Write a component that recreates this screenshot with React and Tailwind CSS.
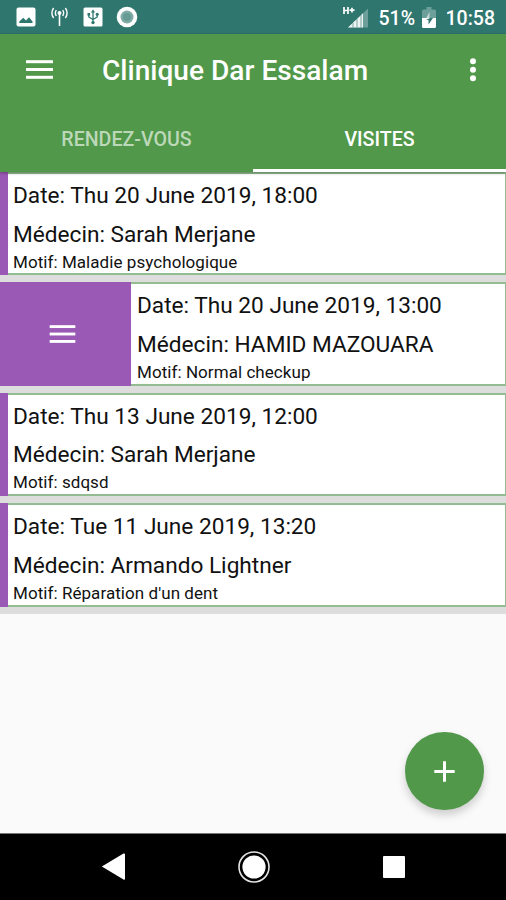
import React, { useState } from 'react';

const visites = [
  { id: 1, date: 'Thu 20 June 2019, 18:00', medecin: 'Sarah Merjane', motif: 'Maladie psychologique' },
  { id: 2, date: 'Thu 20 June 2019, 13:00', medecin: 'HAMID MAZOUARA', motif: 'Normal checkup' },
  { id: 3, date: 'Thu 13 June 2019, 12:00', medecin: 'Sarah Merjane', motif: 'sdqsd' },
  { id: 4, date: 'Tue 11 June 2019, 13:20', medecin: 'Armando Lightner', motif: "Réparation d'un dent" },
];

const MenuIcon = ({ className = '' }) => (
  <svg viewBox="0 0 27 20" className={className} fill="currentColor">
    <rect x="0" y="0.2" width="27" height="3" />
    <rect x="0" y="8" width="27" height="3" />
    <rect x="0" y="15.8" width="27" height="3" />
  </svg>
);

const StatusBar = () => (
  <div className="h-[34px] shrink-0 bg-[#2f766f] flex items-center justify-between pl-4 pr-[11px]">
    <div className="flex items-center text-white">
      <svg width="20" height="20" viewBox="0 0 20 20">
        <rect x="0.5" y="0.5" width="19" height="19" rx="2" fill="currentColor" />
        <path d="M3.3 16 V14.5 L7.3 10.8 L10 13.6 L13 10.3 L16.5 14.5 V16 Z" fill="#2f766f" />
      </svg>
      <svg width="17" height="20" viewBox="0 0 17 20" fill="none" stroke="currentColor" strokeWidth="1.4" className="ml-[15px]">
        <circle cx="8.5" cy="6" r="2" fill="currentColor" stroke="none" />
        <path d="M8.5 6V19" strokeWidth="1.6" />
        <path d="M5.3 3Q3.4 6 5.3 9M11.7 3Q13.6 6 11.7 9M2.6 1Q-0.8 6 2.6 11M14.4 1Q17.8 6 14.4 11" />
      </svg>
      <svg width="20" height="20" viewBox="0 0 20 20" className="ml-[15px]">
        <rect x="0.5" y="0.5" width="19" height="19" rx="1.5" fill="currentColor" />
        <g fill="none" stroke="#2f766f" strokeWidth="1.3">
          <path d="M10 4V15M5.8 7.5V10L10 12.5L14.2 10V7.5" />
          <path d="M10 2.3L12 5.5H8Z" fill="#2f766f" stroke="none" />
          <rect x="4.5" y="6" width="2.6" height="2.6" fill="#2f766f" stroke="none" />
          <circle cx="14.2" cy="7.3" r="1.5" fill="#2f766f" stroke="none" />
          <circle cx="10" cy="15.6" r="1.7" fill="#2f766f" stroke="none" />
        </g>
      </svg>
      <svg width="22" height="22" viewBox="0 0 22 22" className="ml-[13px]">
        <circle cx="11" cy="11" r="10.3" fill="currentColor" />
        <circle cx="11" cy="11" r="6.5" fill="#7faaa5" />
        <circle cx="11" cy="11" r="4" fill="#669b94" />
      </svg>
    </div>

    <div className="flex items-center text-white">
      <svg width="26" height="23" viewBox="0 0 26 23" fill="currentColor">
        <path d="M5 21.5 L25 2.5 V21.5Z" opacity="0.3" />
        <path d="M5 21.5 L20 7.3 V21.5Z" opacity="0.88" />
        <path d="M10 17V21.5M14 13V21.5M18 9V21.5" stroke="#2f766f" strokeWidth="0.6" />
        <path d="M1 1V8M5 1V8M1 4.5H5M6.5 4.2H11.5M9 1.8V6.6" stroke="currentColor" strokeWidth="1.7" />
      </svg>
      <span className="ml-[10px] w-[37px] text-[19.5px] leading-none font-medium whitespace-nowrap mt-[3px]">51%</span>
      <svg width="14" height="21" viewBox="0 0 14 21" fill="currentColor" className="ml-[6px]">
        <path d="M4.5 0H9.5V2.5H12.5Q14 2.5 14 4V11H0V4Q0 2.5 1.5 2.5H4.5Z" opacity="0.3" />
        <path d="M0 11H14V19.5Q14 21 12.5 21H1.5Q0 21 0 19.5Z" />
        <path d="M8 11H11L6.5 17.5V13H4Z" fill="#2f766f" />
        <path d="M7.5 5V11H4.2Z" opacity="0.6" />
      </svg>
      <span className="ml-[10px] text-[19.5px] leading-none font-medium whitespace-nowrap mt-[3px]">10:58</span>
    </div>
  </div>
);

const Header = () => (
  <header className="h-[72px] shrink-0 flex items-center text-white pl-[26px] pr-[29px]">
    <button className="block">
      <MenuIcon className="w-[27px] h-5 block" />
    </button>
    <h1 className="ml-[49px] flex-1 text-[28.1px] leading-8 font-medium mt-[2px] whitespace-nowrap">Clinique Dar Essalam</h1>
    <svg width="8" height="24" viewBox="0 0 8 24" fill="currentColor">
      <circle cx="4" cy="3.2" r="3" />
      <circle cx="4" cy="11.8" r="3" />
      <circle cx="4" cy="20.3" r="3" />
    </svg>
  </header>
);

const Tabs = ({ active, onChange }) => (
  <div className="h-[66px] shrink-0 grid grid-cols-2 text-[19.6px] font-medium">
    {['RENDEZ-VOUS', 'VISITES'].map((tab) => (
      <button
        key={tab}
        onClick={() => onChange(tab)}
        className={`border-b-[3px] pt-[5px] leading-none whitespace-nowrap ${
          active === tab ? 'text-white border-white' : 'text-[#bcd8b9] border-transparent'
        }`}
      >
        {tab}
      </button>
    ))}
  </div>
);

const VisiteCard = ({ visite, open, onToggle }) => (
  <div className="h-[110.4px] pb-[7px] bg-[#dcdddc] flex flex-col">
    <div className="flex-1 flex bg-white">
      <button
        onClick={onToggle}
        className={`shrink-0 bg-[#9b59b6] text-white flex items-center ${open ? 'w-[131px] pl-[49px]' : 'w-2'}`}
      >
        {open && <MenuIcon className="w-[27px] h-[19px]" />}
      </button>
      <div className={`flex-1 border-y-2 border-r border-[#93bd90] text-[#111] whitespace-nowrap overflow-hidden ${open ? 'pl-[6px]' : 'pl-[5px]'}`}>
        <p className="mt-[3px] h-[38.5px] text-[22.65px] leading-[37px]">Date: {visite.date}</p>
        <p className="h-[36px] text-[22.65px] leading-[37px]">Médecin: {visite.medecin}</p>
        <p className="text-[17px] leading-5 tracking-[0.06px]">Motif: {visite.motif}</p>
      </div>
    </div>
  </div>
);

export default function App() {
  const [tab, setTab] = useState('VISITES');
  const [openId, setOpenId] = useState(2);

  return (
    <div className="w-[506px] h-[900px] flex flex-col overflow-hidden relative bg-[#fafafa] font-['Roboto',sans-serif]">
      <StatusBar />
      <div className="bg-[#51984a] shrink-0 flex flex-col shadow-[0_1px_3px_rgba(0,0,0,0.35)] relative">
        <Header />
        <Tabs active={tab} onChange={setTab} />
      </div>

      <main className="flex-1 min-h-0">
        {visites.map((v) => (
          <VisiteCard
            key={v.id}
            visite={v}
            open={openId === v.id}
            onToggle={() => setOpenId(openId === v.id ? null : v.id)}
          />
        ))}
      </main>

      {/* Bouton d'ajout */}
      <button className="absolute right-[22px] bottom-[90px] w-[79px] h-[78px] rounded-full bg-[#51984a] text-white flex items-center justify-center shadow-[0_5px_9px_rgba(0,0,0,0.18)]">
        <svg width="21" height="21" viewBox="0 0 21 21" stroke="currentColor" strokeWidth="3">
          <path d="M10.5 0.3V20.7M0.3 10.5H20.7" />
        </svg>
      </button>

      <nav className="h-[67px] shrink-0 bg-black border-t border-[#777] flex items-center justify-between pl-[101px] pr-[101px] text-white">
        <svg width="24" height="28" viewBox="0 0 24 28" fill="currentColor">
          <path d="M0.8 13.4L22.5 0.5Q24 0 24 1.5V25.5Q24 27.2 22.5 26.5Z" />
        </svg>
        <svg width="32" height="32" viewBox="0 0 32 32">
          <circle cx="16" cy="16" r="15" fill="none" stroke="#e5e5e5" strokeWidth="1.6" />
          <circle cx="16" cy="16" r="11.6" fill="currentColor" />
        </svg>
        <div className="w-[22px] h-[22px] bg-white rounded-[1px]" />
      </nav>
    </div>
  );
}
